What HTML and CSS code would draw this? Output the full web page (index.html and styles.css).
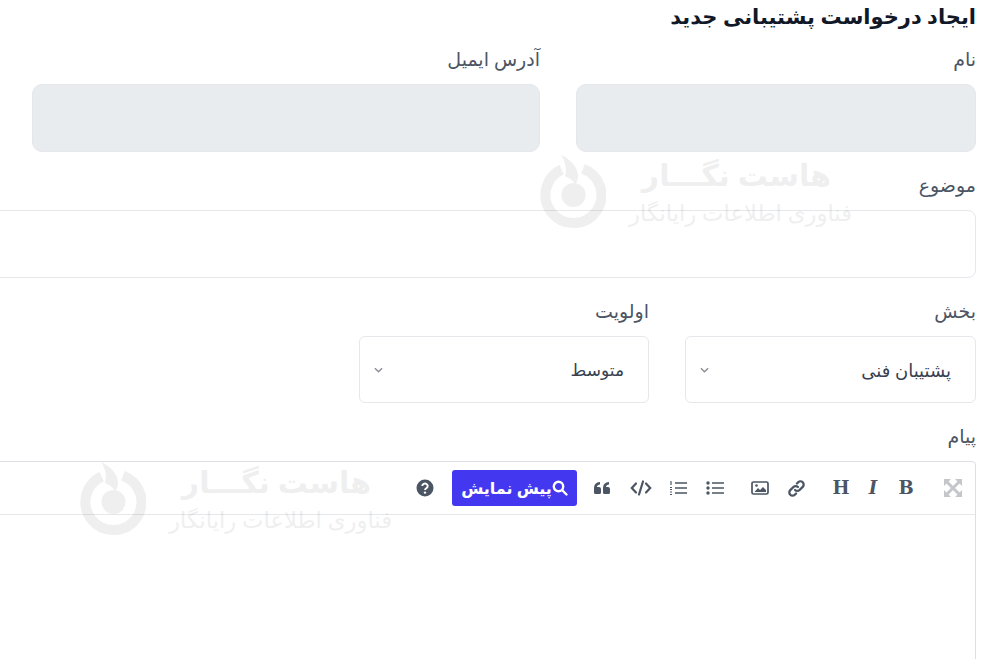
FILE: index.html
```html
<!DOCTYPE html>
<html lang="fa" dir="rtl">
<head>
    <meta charset="UTF-8">
    <meta name="viewport" content="width=device-width, initial-scale=1.0">
    <title>ایجاد درخواست پشتیبانی جدید</title>
    <link rel="stylesheet" href="styles.css">
</head>
<body>
    <main class="page">
        <h1 class="title">ایجاد درخواست پشتیبانی جدید</h1>

        <div class="row row-contact">
            <div class="field field-name">
                <label class="label">نام</label>
                <div class="input input-disabled"></div>
            </div>
            <div class="field field-email">
                <label class="label">آدرس ایمیل</label>
                <div class="input input-disabled"></div>
            </div>
        </div>

        <div class="field field-wide">
            <label class="label">موضوع</label>
            <div class="input"></div>
        </div>

        <div class="row row-selects">
            <div class="field field-select">
                <label class="label">بخش</label>
                <div class="input select">
                    <span class="select-value-long">پشتیبان فنی</span>
                    <svg class="caret" viewBox="0 0 10 6"><path d="M1 1l4 4 4-4" /></svg>
                </div>
            </div>
            <div class="field field-priority">
                <label class="label">اولویت</label>
                <div class="input select">
                    <span>متوسط</span>
                    <svg class="caret" viewBox="0 0 10 6"><path d="M1 1l4 4 4-4" /></svg>
                </div>
            </div>
        </div>

        <div class="field field-wide">
            <label class="label">پیام</label>
            <div class="editor">
                <div class="toolbar">
                    <svg class="tool tool-expand" viewBox="0 0 18 18"><path d="M0 0h7L0 7zM18 0v7l-7-7zM18 18h-7l7-7zM0 18v-7l7 7z" /><path class="expand-cross" d="M3 3l12 12M15 3L3 15" /></svg>
                    <span class="tool-letter tool-b">B</span>
                    <span class="tool-letter tool-i">I</span>
                    <span class="tool-letter tool-h">H</span>
                    <svg class="tool tool-link" viewBox="0 0 18 18"><path class="line" d="M7.600 10.400a3 3 0 0 0 4.300 0l3-3a3 3 0 0 0-4.300-4.300l-1.200 1.200M10.400 7.600a3 3 0 0 0-4.300 0l-3 3a3 3 0 0 0 4.300 4.300l1.200-1.200" /></svg>
                    <svg class="tool tool-image" viewBox="0 0 18 16"><rect class="thin" x="1" y="2" width="16" height="12" rx="1.500" /><path d="M3.500 12l3.500-4 2 2 3-3 3 3v2z" /><circle cx="5.500" cy="5.500" r="1.300" /></svg>
                    <svg class="tool tool-ul" viewBox="0 0 18 16"><path class="thin" d="M6 3h12M6 8h12M6 13h12" /><circle cx="2" cy="3" r="1.700" /><circle cx="2" cy="8" r="1.700" /><circle cx="2" cy="13" r="1.700" /></svg>
                    <svg class="tool tool-ol" viewBox="0 0 18 16"><path class="thin" d="M6 3h12M6 8h12M6 13h12" /><path class="dots" d="M2 1v4M1 7.500h2M1 9.500h2M1 12h2M1 14.500h2" /></svg>
                    <svg class="tool tool-code" viewBox="0 0 22 16"><path class="line" d="M6 3.500L1.800 8 6 12.500M16 3.500L20.200 8 16 12.500M13 1.500L9 14.500" /></svg>
                    <svg class="tool tool-quote" viewBox="0 0 18 14"><path d="M1 7.500C1 3.500 3 1.300 7 1v2.500C5.200 3.700 4.200 4.500 4 6h2a2 2 0 0 1 2 2v3.500a1.500 1.500 0 0 1-1.500 1.500h-4A1.500 1.500 0 0 1 1 11.500zM10 7.500c0-4 2-6.200 6-6.500v2.500c-1.800.2-2.800 1-3 2.500h2a2 2 0 0 1 2 2v3.500a1.500 1.500 0 0 1-1.500 1.500h-4a1.500 1.500 0 0 1-1.500-1.500z" /></svg>
                    <button class="preview" type="button">
                        <svg class="preview-icon" viewBox="0 0 16 16"><circle cx="6.500" cy="6.500" r="4.700" /><path d="M10 10l4.500 4.500" /></svg>
                        <span>پیش نمایش</span>
                    </button>
                    <svg class="tool tool-help" viewBox="0 0 18 18"><circle cx="9" cy="9" r="8.500" /><path class="mark" d="M6.300 7a2.700 2.500 0 1 1 4.200 2.100c-1 .7-1.500 1-1.500 2" /><circle class="dot" cx="9" cy="13.600" r="1.200" /></svg>
                </div>
                <div class="editor-body"></div>
            </div>
        </div>

        <div class="watermark watermark-top">
            <div class="wm-text">
                <div class="wm-name">هاست نگـــار</div>
                <div class="wm-sub">فناوری اطلاعات رایانگار</div>
            </div>
            <svg class="wm-logo" viewBox="0 0 66 76"><path class="wm-ring" d="M43 14.700A28 28 0 1 1 21.700 15.600" /><path d="M21 1C30 5 38 13 38 22C38 25 37 28 35 30C33 26 29 24 25 22C27 16 26 8 21 1z" /><circle cx="33.500" cy="41" r="12" /></svg>
        </div>
        <div class="watermark watermark-bottom">
            <div class="wm-text">
                <div class="wm-name">هاست نگـــار</div>
                <div class="wm-sub">فناوری اطلاعات رایانگار</div>
            </div>
            <svg class="wm-logo" viewBox="0 0 66 76"><path class="wm-ring" d="M43 14.700A28 28 0 1 1 21.700 15.600" /><path d="M21 1C30 5 38 13 38 22C38 25 37 28 35 30C33 26 29 24 25 22C27 16 26 8 21 1z" /><circle cx="33.500" cy="41" r="12" /></svg>
        </div>
    </main>
</body>
</html>
```

FILE: styles.css
```css
html, body {
    margin: 0;
    height: 100%;
    overflow: hidden;
    background-color: #fff;
}

body {
    font-family: "Noto Sans", "DejaVu Sans", sans-serif;
    color: #4b5563;
}

.page {
    position: relative;
    width: 1000px;
    height: 659px;
    box-sizing: border-box;
    padding-right: 24px;
    overflow: hidden;
}

.title {
    margin: 0;
    height: 44px;
    font-size: 21px;
    font-weight: 700;
    line-height: 32px;
    color: #111827;
}

.row {
    display: flex;
}

.row-contact {
    gap: 36px;
    margin-bottom: 18px;
}

.row-selects {
    gap: 36px;
    margin-bottom: 18px;
}

.field-name {
    width: 400px;
}

.field-email {
    width: 508px;
}

.field-select {
    width: 291px;
}

.field-priority {
    width: 290px;
}

.field-wide {
    width: 1000px;
    margin-bottom: 18px;
}

.label {
    display: block;
    height: 40px;
    font-size: 19px;
    line-height: 31px;
    color: #4b5563;
}

.input {
    box-sizing: border-box;
    height: 68px;
    border: 1px solid #e5e7eb;
    border-radius: 8px;
    background-color: #fff;
}

.input-disabled {
    border-radius: 10px;
    background-color: #e9ecef;
}

.select {
    display: flex;
    align-items: center;
    justify-content: space-between;
    height: 67px;
    padding: 0 24px 0 14px;
    border-radius: 6px;
    font-size: 17px;
    color: #374151;
}

.select-value-long {
    font-size: 18px;
}

.caret {
    width: 9px;
    height: 6px;
    fill: none;
    stroke: #8b8f96;
    stroke-width: 1.600;
}

.editor {
    height: 260px;
    border: 1px solid #dcdfe4;
    border-radius: 4px 4px 0 0;
}

.toolbar {
    position: relative;
    display: flex;
    align-items: center;
    box-sizing: border-box;
    height: 53px;
    border-bottom: 1px solid #e5e7eb;
    padding-right: 12px;
}

.tool {
    flex: none;
    fill: #4b5563;
}

.tool-letter {
    flex: none;
    width: 18px;
    font-family: "DejaVu Serif", serif;
    font-size: 18px;
    font-weight: 700;
    line-height: 20px;
    text-align: center;
    color: #4b5563;
}

.tool-expand {
    width: 18px;
    height: 18px;
    margin-right: 1px;
    margin-left: 29px;
    fill: #c4c6ca;
}

.expand-cross {
    fill: none;
    stroke: #c4c6ca;
    stroke-width: 3;
}

.tool-b { margin-left: 15px; }
.tool-i { margin-left: 14px; font-style: italic; }
.tool-h { margin-left: 26px; }

.line, .thin, .dots {
    fill: none;
    stroke: #4b5563;
}

.line {
    stroke-width: 2.200;
    stroke-linecap: round;
}

.thin {
    stroke-width: 1.700;
}

.dots {
    stroke-width: 1.200;
}

.tool-link {
    width: 19px;
    height: 19px;
    margin-left: 18px;
}

.tool-image {
    width: 18px;
    height: 16px;
    margin-left: 27px;
}

.tool-ul {
    width: 18px;
    height: 16px;
    margin-left: 19px;
}

.tool-ol {
    width: 18px;
    height: 16px;
    margin-left: 17px;
}

.tool-code {
    width: 22px;
    height: 16px;
    margin-left: 19px;
}

.tool-quote {
    width: 18px;
    height: 14px;
    margin-left: 16px;
}

.preview {
    flex: none;
    display: flex;
    align-items: center;
    justify-content: center;
    box-sizing: border-box;
    width: 125px;
    height: 36px;
    margin-left: 18px;
    padding: 0;
    border: none;
    border-radius: 3px;
    background-color: #4338ef;
    font-family: inherit;
    font-size: 16px;
    font-weight: 700;
    color: #fff;
}

.preview-icon {
    flex: none;
    width: 16px;
    height: 16px;
    fill: none;
    stroke: #fff;
    stroke-width: 2.400;
    stroke-linecap: round;
}

.tool-help {
    width: 18px;
    height: 18px;
}

.mark {
    fill: none;
    stroke: #fff;
    stroke-width: 2;
}

.dot {
    fill: #fff;
}

.watermark {
    position: absolute;
    display: flex;
    align-items: flex-start;
    flex-direction: row-reverse;
    gap: 18px;
    width: 312px;
    direction: ltr;
    opacity: 0.09;
    pointer-events: none;
    color: #555;
}

.watermark-top {
    top: 154px;
    left: 540px;
}

.watermark-bottom {
    top: 461px;
    left: 80px;
}

.wm-text {
    flex: 1;
    padding-top: 2px;
    direction: rtl;
}

.wm-name {
    padding-right: 21px;
    font-size: 30px;
    font-weight: 700;
    line-height: 38px;
    white-space: nowrap;
}

.wm-sub {
    margin-top: 6px;
    font-size: 22.700px;
    line-height: 26px;
    white-space: nowrap;
}

.wm-logo {
    flex: none;
    width: 66px;
    height: 76px;
    fill: #555;
}

.wm-ring {
    fill: none;
    stroke: #555;
    stroke-width: 10;
}
```
